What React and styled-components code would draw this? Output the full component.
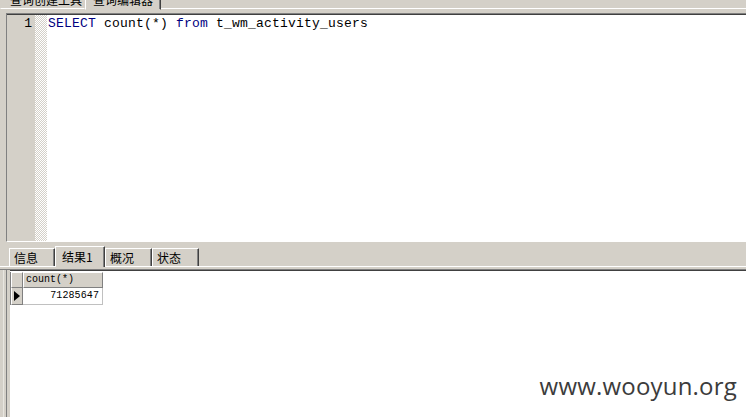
import React from 'react';
import styled, { createGlobalStyle } from 'styled-components';

const Global = createGlobalStyle`
  html, body { margin: 0; padding: 0; background: #d4d0c8; overflow: hidden; }
  #root { width: 746px; height: 417px; }
`;

const Window = styled.div`
  position: relative;
  width: 746px;
  height: 417px;
  display: flex;
  flex-direction: column;
  background: #d4d0c8;
  overflow: hidden;
  font-family: "Noto Sans CJK SC", sans-serif;
  color: #000;
`;

const TopTabRow = styled.div`
  display: flex;
  align-items: stretch;
  height: 22px;
  margin-top: -12px;
  flex: none;
`;

const TopTab = styled.div`
  display: flex;
  align-items: flex-end;
  box-sizing: border-box;
  width: ${p => p.$w}px;
  padding-left: ${p => p.$pl}px;
  font-size: 12px;
  line-height: 14px;
  background: #d4d0c8;
  border-left: 1px solid ${p => (p.$first ? '#d4d0c8' : '#fff')};
  border-right: 1px solid ${p => (p.$active ? '#404040' : '#d4d0c8')};
  box-shadow: ${p => (p.$active ? 'inset -1px 0 #808080' : 'none')};
  border-bottom: ${p => (p.$active ? '1px solid #d4d0c8' : '1px solid #fff')};
  height: ${p => (p.$active ? 22 : 21)}px;
  padding-bottom: ${p => (p.$active ? 2 : 1)}px;
`;

const TopFiller = styled.div`
  flex: 1;
  height: 21px;
  box-sizing: border-box;
  border-bottom: 1px solid #fff;
`;

const Gap = styled.div`
  height: ${p => p.$h}px;
  flex: none;
`;

const EditorFrame = styled.div`
  display: flex;
  flex: none;
  height: 229px;
  margin-left: 6px;
  box-sizing: border-box;
  border-top: 1px solid #808080;
  border-left: 1px solid #808080;
  border-bottom: 1px solid #fff;
  background: #fff;
`;

const Gutter = styled.div`
  width: 28px;
  flex: none;
  background: #d4d0c8;
  box-sizing: border-box;
  padding: 1px 3px 0 0;
  text-align: right;
  font-family: "Liberation Mono", monospace;
  font-size: 13px;
  line-height: 16px;
  border-top: 1px solid #404040;
`;

const Hatch = styled.div`
  width: 12px;
  flex: none;
  background: repeating-conic-gradient(#d4d0c8 0 25%, #fff 0 50%) 0 0 / 2px 2px;
  border-top: 1px solid #404040;
`;

const CodeArea = styled.div`
  flex: 1;
  padding: 1px 0 0 1px;
  font-family: "Liberation Mono", monospace;
  font-size: 13px;
  letter-spacing: 0.2px;
  line-height: 16px;
  white-space: pre;
  color: #000;
  border-top: 1px solid #404040;
`;

const Kw = styled.span`
  color: #000080;
`;

const TabBar = styled.div`
  display: flex;
  align-items: flex-end;
  flex: none;
  height: 24px;
  padding-left: 9px;
  box-sizing: border-box;
`;

const Tab = styled.div`
  box-sizing: border-box;
  width: ${p => p.$w}px;
  height: ${p => (p.$active ? 21 : 18)}px;
  padding-left: ${p => (p.$active ? 6 : 4)}px;
  display: flex;
  align-items: center;
  font-size: 12px;
  line-height: 14px;
  background: #d4d0c8;
  border-top: 1px solid #fff;
  border-left: 1px solid #fff;
  border-right: 1px solid #404040;
  box-shadow: inset -1px 0 #808080;
  margin-bottom: ${p => (p.$active ? -1 : 0)}px;
  position: relative;
  z-index: ${p => (p.$active ? 1 : 0)};
`;

const TabLine = styled.div`
  height: 1px;
  background: #fff;
  flex: none;
`;

const ResultPanel = styled.div`
  flex: 1;
  display: flex;
  border-top: 1px solid #808080;
  min-height: 0;
`;

const LeftEdge = styled.div`
  width: 10px;
  flex: none;
  background: linear-gradient(90deg, #d4d0c8 0 3px, #e8e6e0 3px 4px, #d4d0c8 4px 6px, #808080 6px 7px, #d4d0c8 7px 10px);
`;

const ResultArea = styled.div`
  flex: 1;
  background: #fff;
  padding-top: 1px;
  border-top: 1px solid #404040;
`;

const Grid = styled.div`
  display: grid;
  grid-template-columns: 12px 80px;
  grid-template-rows: 16px 17px;
  width: 92px;
  border-left: 1px solid #808080;
  box-sizing: border-box;
`;

const HeadCell = styled.div`
  box-sizing: border-box;
  background: #d4d0c8;
  border-top: 1px solid #fff;
  border-left: 1px solid #fff;
  border-right: 1px solid #808080;
  border-bottom: 1px solid #808080;
  font-family: "Liberation Mono", monospace;
  font-size: 10px;
  line-height: 13px;
  padding-left: 2px;
  color: #000;
`;

const RowHead = styled.div`
  box-sizing: border-box;
  background: #d4d0c8;
  border-left: 1px solid #fff;
  border-right: 1px solid #808080;
  border-bottom: 1px solid #808080;
  display: flex;
  align-items: center;
  justify-content: center;
`;

const DataCell = styled.div`
  box-sizing: border-box;
  background: #fff;
  border-right: 1px solid #c0c0c0;
  border-bottom: 1px solid #c0c0c0;
  font-family: "Liberation Mono", monospace;
  font-size: 10px;
  letter-spacing: 0.1px;
  line-height: 16px;
  text-align: right;
  padding-right: 3px;
  color: #000;
`;

const Watermark = styled.div`
  position: absolute;
  right: 9px;
  bottom: 19px;
  height: 24px;
  font-family: "Open Sans", sans-serif;
  font-size: 24px;
  letter-spacing: 0.2px;
  line-height: 24px;
  color: #3c3c3c;
  white-space: nowrap;
`;

export default function App() {
  return (
    <>
      <Global />
      <Window>
        <TopTabRow>
          <TopTab $w={85} $pl={9} $first>查询创建工具</TopTab>
          <TopTab $w={76} $pl={7} $active>查询编辑器</TopTab>
          <TopFiller />
        </TopTabRow>
        <Gap $h={3} />
        <EditorFrame>
          <Gutter>1</Gutter>
          <Hatch />
          <CodeArea>
            <Kw>SELECT</Kw> count(*) <Kw>from</Kw> t_wm_activity_users
          </CodeArea>
        </EditorFrame>
        <TabBar>
          <Tab $w={46}>信息</Tab>
          <Tab $w={50} $active>结果1</Tab>
          <Tab $w={47}>概况</Tab>
          <Tab $w={47}>状态</Tab>
        </TabBar>
        <TabLine />
        <Gap $h={2} />
        <ResultPanel>
          <LeftEdge />
          <ResultArea>
            <Grid>
              <HeadCell />
              <HeadCell>count(*)</HeadCell>
              <RowHead>
                <svg width="6" height="10" viewBox="0 0 6 10">
                  <path d="M0 0 L6 5 L0 10 Z" fill="#000" />
                </svg>
              </RowHead>
              <DataCell>71285647</DataCell>
            </Grid>
          </ResultArea>
        </ResultPanel>
        <Watermark>www.wooyun.org</Watermark>
      </Window>
    </>
  );
}
